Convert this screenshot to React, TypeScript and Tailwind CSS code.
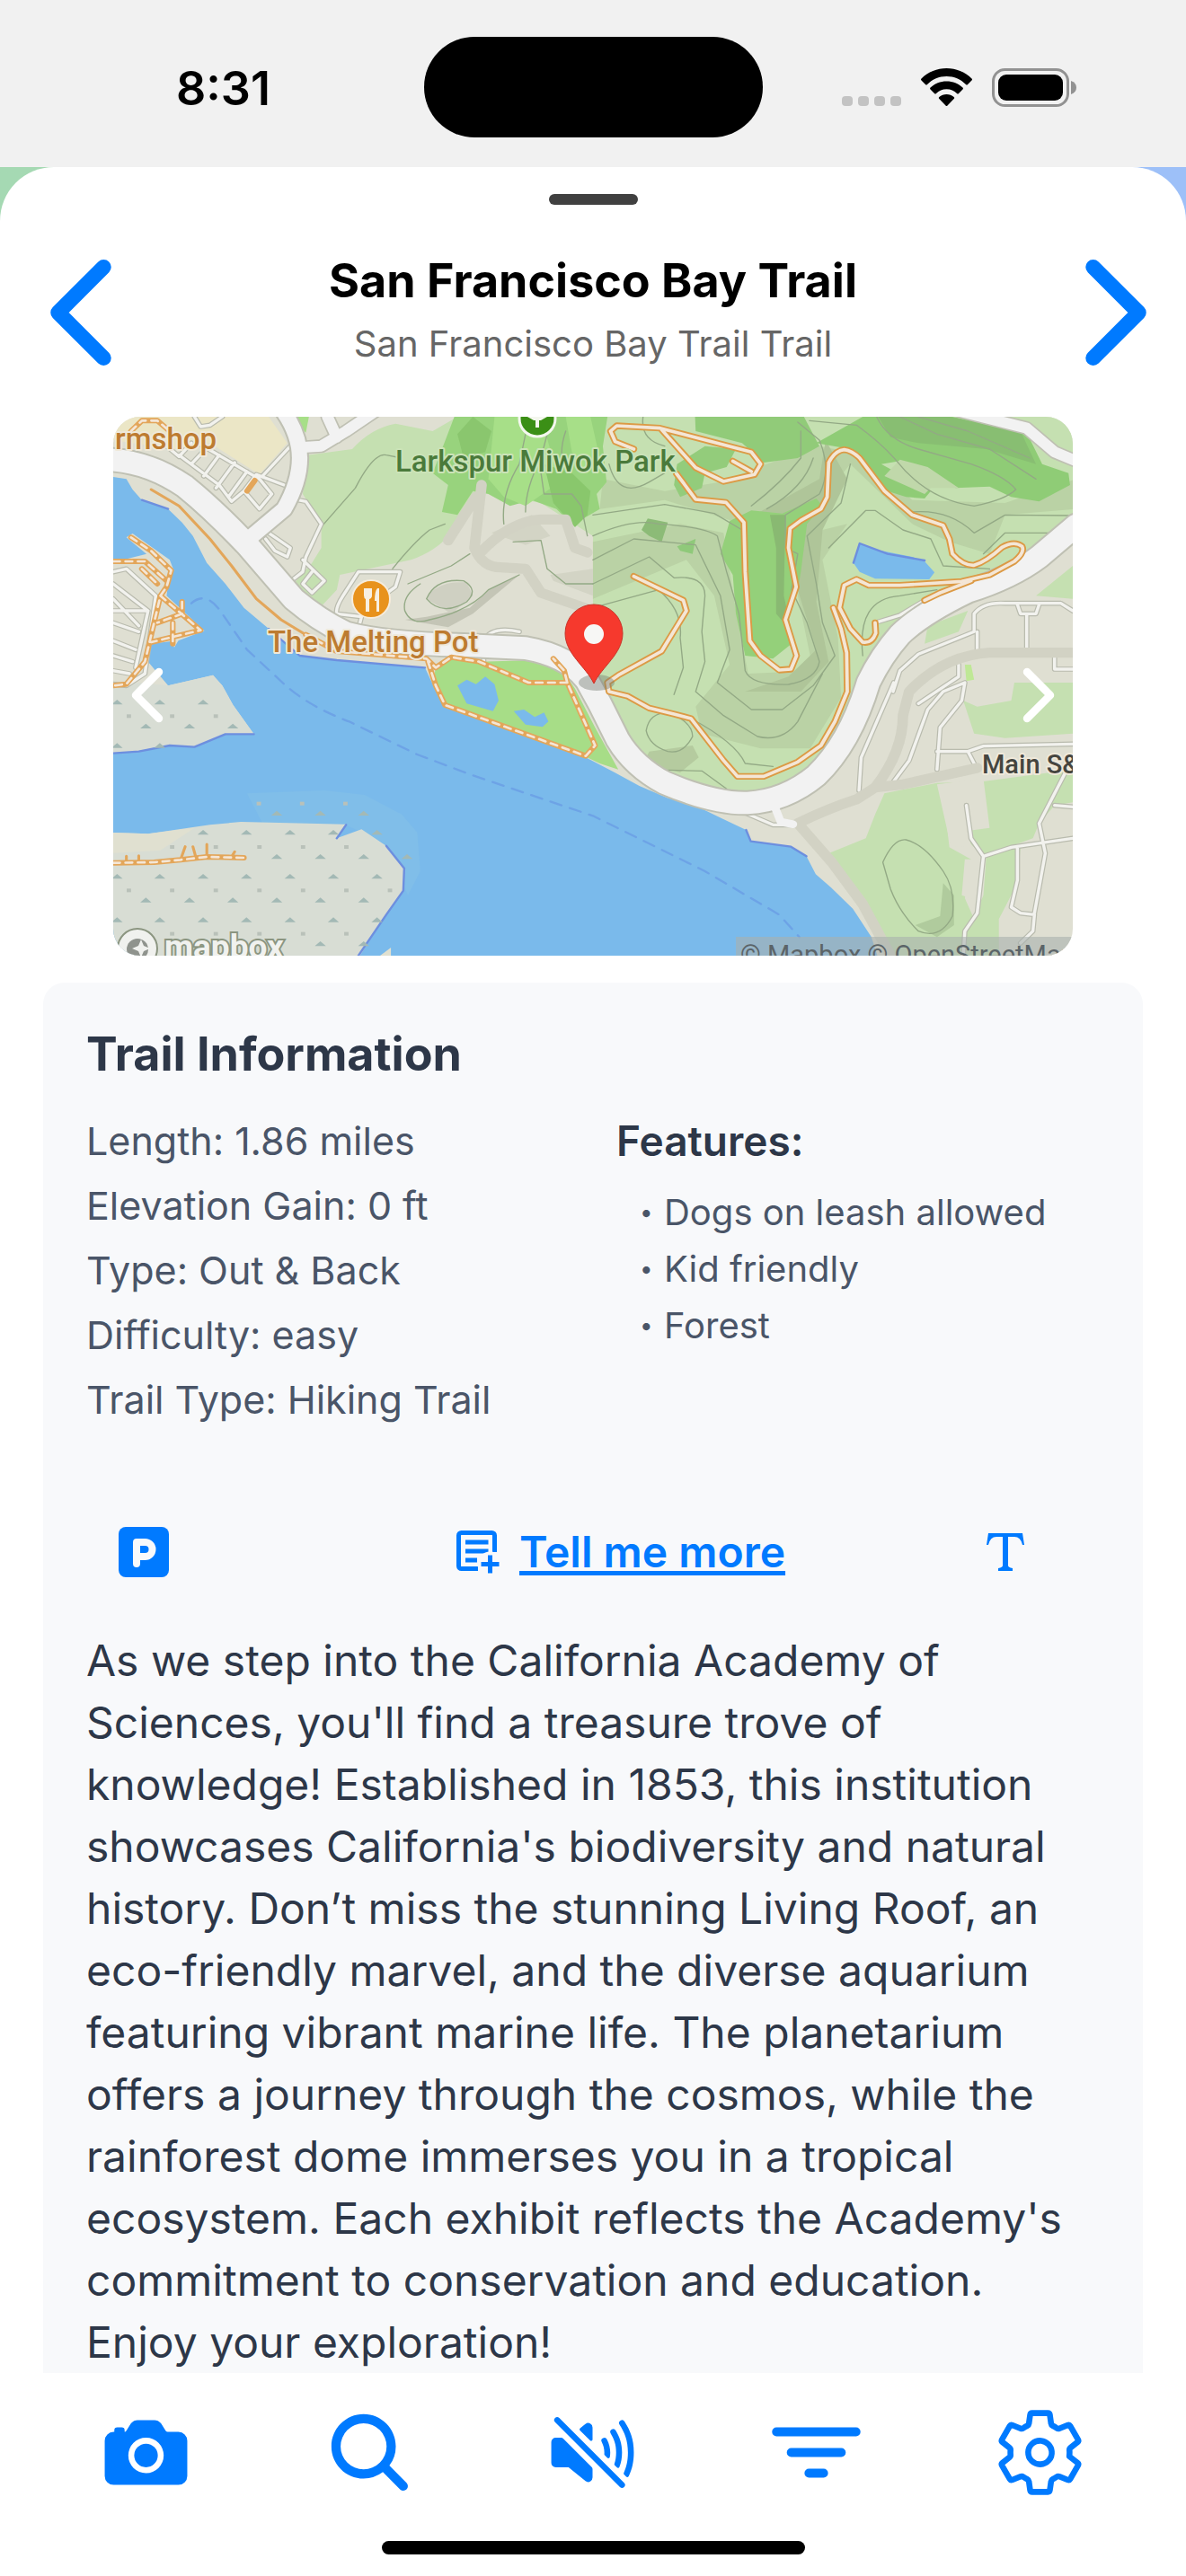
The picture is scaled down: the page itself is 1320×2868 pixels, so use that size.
import { useState } from 'react';
import {
  IoCamera,
  IoChevronBack,
  IoChevronForward,
  IoFilter,
  IoSearch,
  IoSettingsOutline,
  IoVolumeMute,
} from 'react-icons/io5';

const DETAILS = [
  'Length: 1.86 miles',
  'Elevation Gain: 0 ft',
  'Type: Out & Back',
  'Difficulty: easy',
  'Trail Type: Hiking Trail',
];

const FEATURES = ['Dogs on leash allowed', 'Kid friendly', 'Forest'];

const STORY =
  "As we step into the California Academy of Sciences, you'll find a treasure trove of knowledge! Established in 1853, this institution showcases California's biodiversity and natural history. Don’t miss the stunning Living Roof, an eco-friendly marvel, and the diverse aquarium featuring vibrant marine life. The planetarium offers a journey through the cosmos, while the rainforest dome immerses you in a tropical ecosystem. Each exhibit reflects the Academy's commitment to conservation and education. Enjoy your exploration!";

const NAV = [
  { label: 'Camera', Icon: IoCamera },
  { label: 'Search', Icon: IoSearch },
  { label: 'Sound', Icon: IoVolumeMute },
  { label: 'Filter', Icon: IoFilter },
  { label: 'Settings', Icon: IoSettingsOutline },
];

const TRAILS = [
  'M1700 150L1640 125L1625 90L1645 72L1785 80L2080 160L2110 200L2090 235L1990 258L1900 212L1790 85',
  'M2080 225L2020 190',
  'M1838 232L1900 318L1998 328L2056 395L2060 560L2075 790L2110 840L2170 888L2208 885L2226 840L2190 720L2225 610L2200 480L2205 415L2240 388L2305 350L2325 310L2330 195Q2350 155 2380 152Q2405 155 2430 180L2510 290L2600 370L2700 405L2720 450L2730 500Q2765 540 2800 538Q2840 525 2890 478Q2930 455 2955 475Q2965 495 2930 525L2850 570L2760 592L2560 605L2460 605L2420 585L2380 605L2365 680L2400 750L2440 795Q2470 800 2482 765L2480 730',
  'M2345 680L2370 750L2388 830L2390 960L2350 1060L2305 1140L2230 1195L2120 1243L2035 1243L1990 1190L1885 1050L1830 1035L1750 1015L1680 975L1620 960L1615 930L1650 905L1790 825L1870 690L1860 655L1700 575',
  'M2790 590L2690 630L2640 655',
];

const CONTOURS = [
  'M690 410L800 280Q860 160 900 170L950 180',
  'M920 550Q990 460 1040 420L1090 400',
  'M1400 230L1410 300L1500 300L1530 340L1550 440',
  'M1280 400Q1270 300 1330 200L1350 100M1350 360Q1350 280 1400 180L1430 60M1480 90Q1450 180 1490 230',
  'M1730 42Q1720 120 1800 140',
  'M2268 55L2420 70Q2500 130 2550 190Q2650 320 2800 340Q2900 320 2935 285Q2900 240 2790 200L2620 150Q2520 120 2485 42',
  'M2560 42L2680 100L2850 150L3000 250M2620 42L2780 90L2980 180',
  'M1620 200Q1650 320 1750 260L1800 230',
  'M1568 370L1800 335L1960 365L2050 420',
  'M1568 440Q1700 380 1780 400Q1930 410 1970 440L2000 560L2040 700L2060 890Q2080 940 2200 936Q2290 920 2300 860L2260 730L2210 620L2230 500L2190 480L2190 370L2300 300Q2340 220 2300 120L2230 60',
  'M1568 520L1700 450L1900 470L1980 640L2010 820L1970 930L2080 1020L2180 1020L2280 940L2350 840L2310 730L2290 600L2260 440L2370 330L2400 200',
  'M1568 600L1750 510L1830 580Q1930 570 1930 640L1920 760L1930 860L1900 960L1990 1040L2100 1110Q2180 1130 2230 1060L2310 900',
  'M1568 680L1780 620Q1860 690 1850 780L1860 880L1830 970',
  'M2080 340Q2180 260 2240 180L2240 90M2130 350Q2250 280 2280 180',
  'M2330 480L2450 355L2480 355L2570 420L2660 450L2700 540L2850 550',
  'M2600 360Q2720 350 2800 430L2900 370L3119 372',
  'M2830 500L2900 430L3119 430',
  'M2440 840Q2420 650 2560 640L2680 620',
  'M1740 1090Q1750 1030 1810 1030Q1890 1060 1890 1110Q1860 1170 1810 1160Q1750 1140 1740 1090',
  'M1720 1220L1920 1225L2000 1285',
  'M1885 1050Q2030 1130 2060 1200L2150 1210',
  'M970 600L1110 540L1170 500M960 690Q950 640 1010 600M960 690Q980 740 1040 720Q1170 690 1230 620L1330 570',
  'M1030 650Q1060 580 1150 590Q1200 620 1160 660Q1080 710 1030 650',
  'M1310 460L1400 455L1420 550L1480 600L1568 600',
  'M2505 1530Q2540 1450 2580 1455Q2640 1470 2700 1560Q2740 1620 2730 1710Q2690 1790 2620 1760Q2560 1700 2530 1620Z',
];

const STREETS = [
  'M280 42L300 75L330 70L370 42M230 170L360 270L400 325L440 290L490 350L530 300L490 250L300 135M190 140L230 175L270 130M270 200L320 145M310 240L360 170M350 280L410 195M390 310L450 225M500 240L590 140M440 290L480 235L570 270',
  'M615 320L640 325L690 400L640 510L630 560L580 600M630 520L700 590L660 630L630 600L660 560M520 430L590 480L580 510L540 490L510 450',
  'M810 750L820 710L740 700Q735 680 760 640L810 560L945 560L930 610L890 640M1215 790Q1240 740 1330 760M1215 860L1215 800',
  'M17 560L60 550L155 640L120 900L60 940L17 935M17 600L130 690M17 690L130 690L90 880M17 650L100 740M17 730L100 760M17 790L90 820M17 840L80 860M17 890L70 900',
  'M2480 730L2560 705L2640 655M2538 960L2560 890L2620 835L2800 760L2800 700Q2830 660 2900 665L3080 665L3119 690M2940 670L2950 700L3000 700L3010 670M2970 700L2970 830M2810 760L2810 830M2620 1000L2750 910L2750 870M3060 840L3060 885L3119 885',
  'M2428 1290L2435 1180L2540 930M2540 1260L2590 1190L2650 1020L2700 960L2770 930L2760 990L2690 1080L2680 1220M2680 1160L2780 1160L2830 1142L3119 1135M2780 1160L2800 1200',
  'M2775 1340L2790 1450L2830 1510L2810 1700L2770 1760L2765 1842M2830 1510L2920 1480L3119 1450M2940 1480L2940 1590L2920 1680L2950 1700L2995 1705L2990 1760L2950 1800M3100 1220L3010 1400L3030 1500L2995 1700M3060 1340L3119 1345',
  'M2060 1365L2150 1405L2220 1405',
];

const MARSH_ROWS = [
  { y: 995, xs: [30, 168, 308] },
  { y: 1075, xs: [123, 264, 404] },
  { y: 1140, xs: [30, 168] },
  { y: 1366, xs: [546, 687, 827] },
  { y: 1430, xs: [308, 448, 589, 729, 870] },
  { y: 1511, xs: [546, 687, 827, 967] },
  { y: 1577, xs: [30, 168, 308, 448, 589, 729, 870] },
  { y: 1656, xs: [123, 264, 404, 546, 687, 827] },
  { y: 1722, xs: [30, 168, 308, 448, 589, 729, 870] },
  { y: 1802, xs: [687, 827] },
];

const MARSH_DOTS = [
  { y: 1042, xs: [68, 208, 349] },
  { y: 1334, xs: [488, 628, 768] },
  { y: 1479, xs: [208, 349, 490, 631, 771] },
  { y: 1624, xs: [68, 208, 349, 490, 631, 771, 912] },
  { y: 1769, xs: [208, 349, 490, 631, 771] },
];

const MAIN_ROAD =
  'M0 185Q130 190 250 275Q340 350 450 470L600 650Q680 720 770 765Q900 800 1150 805L1350 815Q1490 840 1550 925L1590 1000L1648 1120Q1700 1210 1800 1265Q1960 1335 2068 1332Q2190 1325 2290 1240Q2400 1130 2458 930Q2500 840 2560 770Q2630 700 2780 625Q2920 580 3010 510L3130 405';

const TrailMap = () => (
  <svg
    viewBox="0 0 1068 600"
    preserveAspectRatio="xMidYMid slice"
    className="block h-full w-full"
    role="img"
    aria-label="Trail map"
  >
    <rect width="1068" height="600" fill="#dfdfd2" />
    {/* Survey grid: 3102 x 1800 units */}
    <g transform="translate(-6 -14) scale(0.34435 0.33333)" strokeLinejoin="round" strokeLinecap="round">
      {/* Meadows and woods */}
      <path d="M260 42H520L580 130L490 235L330 130L210 150L17 120V42Z" fill="#ebe6c6" />
      <path
        d="M645 170L790 150Q850 80 930 65L1050 90L1130 42H3130V430L2900 600L2750 660L2540 760L2450 1000L2330 1250L2080 1300L1800 1250L1650 1100L1568 900V440L1400 330L1200 290L1100 440Q1060 490 980 520L750 570L740 620L690 675L600 600L660 530L690 480V400L630 300Z"
        fill="#c5e0b1"
      />
      <path d="M1590 350L1800 320L2050 400L2210 380L2320 300L2400 200L2600 400L2720 460L2850 500L2900 370L3130 350V250L2900 330L2600 320L2450 170L2300 140L2130 200L1980 260L1800 290L1600 250Z" fill="#bad2a5" />
      <path d="M1568 460L1850 400L1990 430L2030 690L2070 900L2280 890L2230 640L2270 430L2390 400L2310 520L2360 780L2370 980L2270 1150L2110 1150L1920 1100L1900 1010L2010 870L1960 640L1870 520L1568 650Z" fill="#bad2a5" />
      <path d="M2090 370L2300 250L2320 120L2390 250L2310 420L2290 660L2330 860L2240 960L2060 960L2200 910L2290 820L2230 620L2240 420Z" fill="#afc599" />
      <path d="M1750 1160L1890 1140L1910 1180L1850 1230L1730 1200Z" fill="#b5cb9f" />
      <path d="M1120 42H1615L1600 140L1612 260L1580 300L1590 350L1540 380L1510 410L1450 350L1370 320L1300 340L1230 300L1180 290L1130 370L1080 360L1100 270L1050 230L1080 150Z" fill="#98d37d" />
      <path d="M1250 42H1400L1460 260L1350 340L1280 310L1230 250Z" fill="#a7df88" />
      <path d="M1480 42H1560L1590 180L1550 230L1500 160Z" fill="#a7df88" />
      <path d="M1410 200L1500 230L1560 290L1550 370L1510 410L1440 330Z" fill="#89c76c" />
      <path d="M1180 42L1240 90L1220 160L1150 180L1130 100Z" fill="#8ac66e" />
      <path d="M1898 42H2250L2300 140L2230 180L2120 195L2050 130L1900 90Z" fill="#91cb79" />
      <path d="M2290 130L2440 42H2730L2970 95L3020 200L3105 230L3110 270L3010 325L2920 310L2850 275L2740 280L2560 190L2500 200L2660 290L2640 315L2580 310L2520 290L2400 150Z" fill="#8fcc76" />
      <path d="M2490 42H2720L2950 90L3000 200L2840 150L2620 130L2530 110Z" fill="#88be72" />
      <path d="M2510 240L2560 185L2650 210L2750 280L2660 280L2640 300Z" fill="#c0d8aa" />
      <path d="M1840 200L1930 140L2030 150L2000 210L1930 230L1920 280L1850 310L1830 270Z" fill="#93cc7b" />
      <path d="M2010 390L2080 355L2180 365L2290 315L2310 340L2260 400L2240 560L2230 620L2200 720L2210 800L2150 850L2060 840L2030 700L2020 570L1980 500Z" fill="#94d07a" />
      <path d="M2140 370L2190 370L2185 640L2210 760L2160 700L2160 480Z" fill="#89b972" />
      <path d="M1725 420L1745 382L1810 395L1790 460L1750 440Z" fill="#8cbb77" />
      <path d="M1840 475L1900 450L1890 500L1850 490Z" fill="#8fc97a" />
      <path d="M590 42H650L640 95Z" fill="#a7df88" />
      <path d="M1230 620L1330 570L1180 700L1100 745L960 720L1030 710L1170 680Z" fill="#c4c5b6" />
      <path d="M1030 650Q1060 590 1160 595L1180 640L1110 700Z" fill="#cfd0c2" />
      <path d="M1240 430L1370 370L1430 440L1350 470ZM1430 570L1568 550V640L1440 590Z" fill="#d3d4c5" />

      {/* East side lots */}
      <path d="M2640 800L2650 740L2780 690L2750 760ZM3000 640L3119 540V650ZM2765 990L2810 1010L2920 990L2930 930H3119V1100L2900 1115L2800 1100Z" fill="#c5e0b1" />
      <path d="M2510 1300L2680 1265L2830 1260L3119 1220V1330L3060 1340L3010 1400L2990 1450L2830 1510L2790 1470L2700 1300L2720 1480L2790 1520L2770 1650L2800 1720V1842H2520L2330 1500L2450 1450L2480 1370Z" fill="#c5e0b1" />
      <path d="M2680 1270L2830 1250L2850 1415L2780 1425L2790 1475L2725 1478ZM2770 1520H2840L2820 1660L2760 1640Z" fill="#dfdfd2" />
      <path d="M2840 1500L2950 1480L2940 1600L2880 1720L2880 1842H2770L2780 1760L2830 1640Z" fill="#c5e0b1" />
      <path d="M2700 1600L2735 1640V1740L2680 1780L2610 1740L2690 1710Z" fill="#b0cb9d" />
      <path d="M2770 870H2790L2800 920L2775 925Z" fill="#bfe896" />

      {/* Bay */}
      <path
        d="M0 240L60 250L80 285L110 320L195 350L240 395L275 440L320 530L380 600L440 680L520 750L620 840L740 855L1025 880L1050 935L1085 1005L1545 1180L1638 1230L1718 1275L1808 1315L1898 1340L1988 1385L2063 1422L2078 1460L2128 1465L2208 1478L2258 1510L2288 1570L2338 1615L2408 1685L2468 1780L2490 1850H0Z"
        fill="#7abaeb"
      />
      <path d="M2430 465L2480 485L2600 510L2640 525L2672 562L2655 585L2480 583L2430 560L2410 530Z" fill="#7abaeb" />
      <path d="M270 665Q320 620 370 700L450 820L570 935Q650 1010 780 1060L1000 1170L1180 1240L1568 1375L1930 1560L2170 1705L2235 1780" fill="none" stroke="#6da3e6" strokeWidth="7" strokeDasharray="38 28" />
      <path d="M450 1300L700 1290L830 1305L950 1370L1000 1430L1010 1560L970 1640L900 1470L760 1400H500Z" fill="#80bee9" />

      {/* Shore, docks and marsh */}
      <path d="M0 520L50 520L125 500L60 445L80 432L200 520L213 555L195 600L190 640L312 757L228 790L215 812L205 792L140 800L130 860L195 940L340 905L370 940L405 1005L472 1102L380 1102L280 1145L200 1140L100 1160L0 1167Z" fill="#dfdfd2" />
      <path d="M100 930L195 940L340 905L370 940L405 1005L472 1102L380 1102L280 1145L200 1140L100 1160L0 1167V950Z" fill="#d8ddd4" />
      <path d="M0 1430L130 1435L230 1420L330 1405L430 1395L770 1403L740 1450L820 1420L900 1475L958 1550L955 1625L900 1705L810 1850H0Z" fill="#d8ddd4" />
      <path d="M0 1430L130 1435L280 1415L170 1490L0 1500ZM880 1842L915 1815V1842Z" fill="#e0e0d0" />
      <path d="M0 1167L100 1160L200 1140L280 1145L380 1102H472M740 1450L770 1405M900 1475L958 1550L955 1625L900 1705L810 1842M520 750L620 840L740 855L1025 880M110 320L195 350M2063 1422L2078 1460L2208 1478L2258 1510M2410 530L2430 465L2520 500L2640 522" fill="none" stroke="#6d8fdf" strokeWidth="7" />
      {MARSH_ROWS.map(({ y, xs }) =>
        xs.map((x) => <path key={`${x}-${y}`} d={`M${x - 18} ${y + 8}L${x} ${y - 8}L${x + 18} ${y + 8}Z`} fill="#a3b9b5" />),
      )}
      {MARSH_DOTS.map(({ y, xs }) =>
        xs.map((x) => <rect key={`${x}-${y}`} x={x - 7} y={y - 6} width="14" height="12" fill="#b9c1b9" />),
      )}

      {/* Park by the shore */}
      <path d="M1060 880L1100 845L1200 860L1380 855L1470 890L1510 950L1575 1080L1650 1220L1590 1200L1540 1175L1085 1000L1050 935Z" fill="#a7dd87" />
      <path d="M1130 940L1160 920L1190 935L1220 910L1250 935L1263 990L1245 1025L1160 1000ZM1312 1025L1345 1020L1380 1045L1410 1030L1424 1060L1405 1078L1350 1070Z" fill="#7abaeb" />

      {/* Contour lines */}
      <g fill="none" stroke="#93a985" strokeWidth="4">
        {CONTOURS.map((d) => (
          <path key={d} d={d} />
        ))}
      </g>

      {/* Roads */}
      <g fill="none" stroke="#b9bbae" strokeWidth="17">
        {STREETS.map((d) => (
          <path key={d} d={d} />
        ))}
      </g>
      <g fill="none" stroke="#f2f2ee" strokeWidth="10">
        {STREETS.map((d) => (
          <path key={d} d={d} />
        ))}
      </g>
      <g fill="none" stroke="#d2d2c4" strokeWidth="34">
        <path d="M1100 455L1190 310M1208 270L1185 480Q1210 545 1270 545L1350 550L1400 630L1568 690M1200 500Q1300 390 1400 385L1480 385L1510 480L1550 495" />
        <path d="M2230 1400Q2330 1350 2420 1320L2480 1280L2570 1270L2810 1215M2480 1280Q2570 1160 2570 1040L2590 960Q2700 840 2850 830H3119M2230 1400L2340 1530L2440 1670L2530 1842" />
      </g>
      <g fill="none" stroke="#bfc0b3">
        <path d={MAIN_ROAD} strokeWidth="86" />
        <path d="M565 20Q620 100 620 180Q620 260 570 350L455 450" strokeWidth="62" />
        <path d="M620 145L690 140L770 90L870 20M740 110L710 42M2740 20L2970 80L3060 160L3130 190" strokeWidth="46" />
      </g>
      <g fill="none" stroke="#f2f2f2">
        <path d="M565 20Q620 100 620 180Q620 260 570 350L455 450" strokeWidth="50" />
        <path d="M620 145L690 140L770 90L870 20M740 110L710 42M2740 20L2970 80L3060 160L3130 190" strokeWidth="36" />
        <path d="M2150 1330L2175 1395L2215 1403" strokeWidth="26" />
        <path d={MAIN_ROAD} strokeWidth="74" />
      </g>

      {/* Footpaths */}
      <g fill="none" stroke="#dc9a45" strokeWidth="22">
        {TRAILS.map((d) => (
          <path key={d} d={d} />
        ))}
      </g>
      <g fill="none" stroke="#f4e6d6" strokeWidth="11">
        {TRAILS.map((d) => (
          <path key={d} d={d} />
        ))}
      </g>
      <g fill="none" stroke="#e3a65a" strokeWidth="18">
        <path d="M1035 860L1060 940L1090 1005L1545 1175L1575 1140L1485 930L1475 890L1440 850M1485 930L1360 930L1200 860L1110 845L1060 880L1030 850L740 825L640 770" />
        <path d="M75 445L140 490L205 555L190 610L170 640L120 860L60 935L17 940M17 525L120 525L190 590M170 640L300 755L140 795M240 660L240 700L160 730M110 550L160 600M210 730V800M75 90L110 55H160L200 90M450 290L475 255" />
        <path d="M17 1532L150 1530L235 1522L320 1512L440 1515" />
      </g>
      <g fill="none" stroke="#e3a65a" strokeWidth="9">
        <path d="M640 770L560 720L480 650L400 540L330 450L230 340L140 285" />
        <path d="M235 1522L250 1478M285 1515L275 1478M320 1512V1470M60 1528V1510M100 1525V1508M400 1512L410 1495" />
      </g>
      <g fill="none" stroke="#f4e6d6" strokeWidth="8" strokeDasharray="22 18">
        <path d="M1035 860L1060 940L1090 1005L1545 1175L1575 1140L1485 930L1475 890L1440 850M1485 930L1360 930L1200 860L1110 845L1060 880L1030 850L740 825L640 770" />
        <path d="M75 445L140 490L205 555L190 610L170 640L120 860L60 935L17 940M17 525L120 525L190 590M170 640L300 755L140 795M240 660L240 700L160 730M110 550L160 600M210 730V800M75 90L110 55H160L200 90M17 1532L150 1530L235 1522L320 1512L440 1515" />
      </g>
    </g>

    {/* Place markers */}
    <circle cx="472" cy="2" r="20" fill="#3b8f16" stroke="#f4f7ee" strokeWidth="3" />
    <path d="M461 0q2-6 11-6t11 6l-7 4h-2v8h-4v-8h-2z" fill="#f4f7ee" />
    <circle cx="287" cy="203" r="21" fill="#e8921c" stroke="#f6ecdc" strokeWidth="2" />
    <path d="M279 191v8q0 3 2 4v14h4v-14q3-1 3-4v-8M294 191q-3 3-3 14h2v12h3v-26z" fill="#f7efe2" />
    <ellipse cx="538" cy="296" rx="20" ry="9" fill="#6f756c" opacity="0.4" />
    <path d="M535 297C526 278 503 264 503 241a32 32 0 0 1 64 0C567 264 544 278 535 297Z" fill="#f6392d" stroke="#c93328" strokeWidth="1" />
    <circle cx="535" cy="242" r="11" fill="#f7f7f5" />

    {/* Labels */}
    <g className="font-['Roboto'] font-medium" fontSize="33" paintOrder="stroke" strokeLinejoin="round" stroke="#efe9da" strokeWidth="4">
      <text x="2" y="36" fill="#bd7b30">rmshop</text>
      <text x="172" y="262" fill="#bd7b30">The Melting Pot</text>
      <text x="314" y="61" fill="#4a7a3b" stroke="#cbe3b8">Larkspur Miwok Park</text>
      <text x="967" y="397" fontSize="29" fill="#45453f">Main S&amp;</text>
    </g>

    {/* Map credits */}
    <circle cx="27" cy="592" r="22" fill="#f0f1ee" stroke="#8b9580" strokeWidth="2" />
    <circle cx="27" cy="593" r="12" fill="#8f938d" />
    <path d="M31 582l3 7 7 3-7 3-3 7-3-7-7-3 7-3z" fill="#f0f1ee" />
    <text x="57" y="603" className="font-['Roboto'] font-bold" fontSize="37" fill="#f0f1ee" stroke="#8b9580" strokeWidth="4" paintOrder="stroke">mapbox</text>
    <rect x="693" y="579" width="375" height="21" fill="#a9b0ae" opacity="0.6" />
    <text x="698" y="609" className="font-['Roboto']" fontSize="29" fill="#5b6468">© Mapbox © OpenStreetMap</text>
  </svg>
);

const StatusBar = () => (
  <div className="grid h-[186px] shrink-0 grid-cols-3 items-center bg-[#f1f1f1] pt-2">
    <span className="pt-1 pl-[196px] text-[52px] leading-none font-semibold">8:31</span>
    <span className="h-[112px] w-[377px] justify-self-center rounded-full bg-black" />
    <div className="flex items-center justify-end gap-[22px] pr-[122px]">
      <svg viewBox="0 0 66 42" className="h-[42px] w-[66px]" fill="#c3c3c3">
        <rect x="0" y="31" width="12" height="11" rx="4" />
        <rect x="18" y="31" width="12" height="11" rx="4" />
        <rect x="36" y="31" width="12" height="11" rx="4" />
        <rect x="54" y="31" width="12" height="11" rx="4" />
      </svg>
      <svg viewBox="0 0 57 42" className="h-[42px] w-[57px]">
        <path d="M28.500 0C39 0 49 4 56.500 11.500q1 1 0 2L52 18q-1 1-2 0C44 12 37 9 28.500 9S13 12 7 18q-1 1-2 0L.5 13.500q-1-1 0-2C8 4 18 0 28.500 0Z" />
        <path d="M28.500 14.500c7 0 13 2.500 18 7q1 1 0 2L42 28q-1 1-2 0c-3-3-7-4.700-11.500-4.700S20 25 17 28q-1 1-2 0l-4.500-4.500q-1-1 0-2c5-4.500 11-7 18-7Z" />
        <path d="M28.500 29c3 0 6 1 8.200 3q1 1 0 2l-7.200 7.500q-1 1-2 0L20.300 34q-1-1 0-2c2.200-2 5.200-3 8.200-3Z" />
      </svg>
      <svg viewBox="0 0 94 43" className="h-[43px] w-[94px]">
        <rect x="1.500" y="1.500" width="83" height="40" rx="13" fill="none" stroke="#929292" strokeWidth="3" />
        <rect x="7" y="7" width="72" height="29" rx="9" />
        <path d="M88 14q6 2 6 7.500T88 29Z" fill="#929292" />
      </svg>
    </div>
  </div>
);

const ParkingIcon = () => (
  <svg viewBox="0 0 56 56" className="h-14 w-14" fill="none">
    <rect width="56" height="56" rx="8" fill="currentColor" />
    <path d="M20 41V17h9.500a8 8 0 0 1 0 16H20" stroke="#f8f9fb" strokeWidth="8" strokeLinecap="round" strokeLinejoin="round" />
  </svg>
);

const AddNoteIcon = () => (
  <svg viewBox="0 0 48 48" className="h-12 w-12" fill="none" stroke="currentColor" strokeWidth="5">
    <path d="M24 42.500H5.500a3 3 0 0 1-3-3v-34a3 3 0 0 1 3-3h34a3 3 0 0 1 3 3V24" />
    <path d="M10 13h25.500M10 23h25.500M10 33h13" />
    <circle cx="37.500" cy="37.500" r="14" fill="#f8f9fb" stroke="none" />
    <path d="M37.500 27.500v20M27.500 37.500h20" />
  </svg>
);

export default function App() {
  const [big, setBig] = useState(false);

  return (
    <div className="flex min-h-screen flex-col bg-white font-['Inter',sans-serif] text-black">
      <StatusBar />

      <div className="flex grow flex-col bg-linear-to-r from-[#a5d9b3] from-50% to-[#9dc0f8] to-50%">
        <main className="flex grow flex-col rounded-t-[60px] bg-white pt-[30px]">
          <div className="mx-auto h-3 w-[99px] rounded-full bg-[#404040]" />

          {/* Header */}
          <header className="mt-[30px] grid grid-cols-[180px_1fr_180px] items-center">
            <button aria-label="Previous trail" className="text-[#007aff]">
              <IoChevronBack size={180} />
            </button>
            <div className="flex flex-col gap-1.5 text-center">
              <h1 className="text-[52px] leading-[64px] font-bold">San Francisco Bay Trail</h1>
              <p className="text-[40px] leading-[64px] text-[#666666]">San Francisco Bay Trail Trail</p>
            </div>
            <button aria-label="Next trail" className="pl-3 text-[#007aff]">
              <IoChevronForward size={180} className="max-w-none" />
            </button>
          </header>

          {/* Photo carousel */}
          <section className="relative mx-[126px] mt-[26px] h-[600px] overflow-hidden rounded-[30px]">
            <TrailMap />
            <button aria-label="Previous picture" className="absolute inset-y-0 -left-2 pt-5 text-white">
              <IoChevronBack size={92} />
            </button>
            <button aria-label="Next picture" className="absolute inset-y-0 -right-2 pt-5 text-white">
              <IoChevronForward size={92} />
            </button>
          </section>

          {/* Trail information */}
          <section className="mx-12 mt-[30px] grow rounded-t-3xl bg-[#f8f9fb] px-12 pt-12 text-[#2d3748]">
            <h2 className="text-[52px] leading-[64px] font-bold">Trail Information</h2>
            <div className="mt-7 grid grid-cols-[590px_1fr]">
              <ul className="text-[43px] leading-[72px] text-[#4a5568]">
                {DETAILS.map((line) => (
                  <li key={line}>{line}</li>
                ))}
              </ul>
              <div>
                <h3 className="text-[46px] leading-[72px] font-semibold">Features:</h3>
                <ul className="mt-3 pl-[26px] text-[40px] leading-[63px] text-[#4a5568]">
                  {FEATURES.map((feature) => (
                    <li key={feature} className="flex">
                      <span className="w-[27px] text-[26px]">•</span>
                      {feature}
                    </li>
                  ))}
                </ul>
              </div>
            </div>

            <div className="mt-[98px] grid h-[72px] grid-cols-[412px_1fr_auto] items-center text-[#007aff]">
              <button aria-label="Parking" className="justify-self-start pl-9">
                <ParkingIcon />
              </button>
              <button className="flex items-center gap-[22px] justify-self-start">
                <AddNoteIcon />
                <span className="text-[48px] leading-[72px] font-semibold underline decoration-[5px] underline-offset-4">
                  Tell me more
                </span>
              </button>
              <button aria-label="Text size" className="pr-[84px]" onClick={() => setBig(!big)}>
                <svg viewBox="0 0 42 42" className="h-[42px] w-[42px]" fill="currentColor">
                  <path d="M2 0h38l2 13h-2q-2-9-9-9h-7v32q0 2 5 3v3H13v-3q5-1 5-3V4h-7q-7 0-9 9H0Z" />
                </svg>
              </button>
            </div>

            <p className={big ? 'mt-[50px] text-[60px] leading-[84px]' : 'mt-[50px] text-[48px] leading-[69px]'}>{STORY}</p>
          </section>
        </main>
      </div>

      {/* Tab bar */}
      <nav className="flex shrink-0 flex-col items-center bg-white pt-9 pb-6">
        <div className="flex w-full justify-around px-[38px] text-[#007aff]">
          {NAV.map(({ label, Icon }) => (
            <button key={label} aria-label={label}>
              <Icon size={105} />
            </button>
          ))}
        </div>
        <div className="mt-[46px] h-[15px] w-[471px] rounded-full bg-black" />
      </nav>
    </div>
  );
}
